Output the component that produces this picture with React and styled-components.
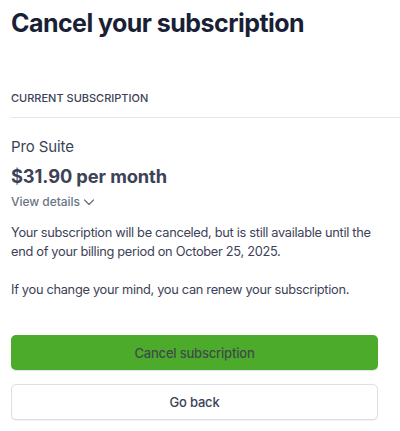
import React from "react";
import styled, { createGlobalStyle } from "styled-components";

const Global = createGlobalStyle`
  html, body { margin: 0; padding: 0; background: #ffffff; }
  body {
    font-family: Inter, "Noto Sans", "Liberation Sans", sans-serif;
    -webkit-font-smoothing: antialiased;
  }
`;

const Page = styled.div`
  width: 400px;
  height: 431px;
  overflow: hidden;
  box-sizing: border-box;
  padding: 6px 0 0 11px;
  display: flex;
  flex-direction: column;
`;

const Title = styled.h1`
  margin: 0;
  font-size: 25px;
  line-height: 34px;
  font-weight: 700;
  color: #1a1f36;
  letter-spacing: -0.55px;
`;

const Section = styled.section`
  margin-top: 51px;
  display: flex;
  flex-direction: column;
`;

const SectionLabel = styled.div`
  font-size: 11px;
  line-height: 14px;
  font-weight: 500;
  color: #3c4257;
  padding-bottom: 12px;
  border-bottom: 1px solid #e3e8ee;
`;

const PlanName = styled.div`
  margin-top: 19px;
  font-size: 15px;
  line-height: 20px;
  color: #3c4257;
  letter-spacing: -0.1px;
`;

const Price = styled.div`
  margin-top: 6px;
  font-size: 18.3px;
  line-height: 26px;
  font-weight: 700;
  color: #3c4257;
  letter-spacing: -0.1px;
`;

const DetailsToggle = styled.button`
  margin-top: 5px;
  padding: 0;
  border: 0;
  background: none;
  align-self: flex-start;
  display: flex;
  align-items: center;
  gap: 3px;
  font-family: inherit;
  font-size: 12px;
  line-height: 16px;
  font-weight: 500;
  color: #697386;
  letter-spacing: -0.05px;
  cursor: pointer;
`;

const Body = styled.p`
  margin: ${(p) => p.$top}px 0 0;
  width: 380px;
  font-size: 12.8px;
  line-height: 19px;
  color: #3c4257;
  letter-spacing: -0.3px;
`;

const Actions = styled.div`
  margin-top: 36px;
  width: 367px;
  display: flex;
  flex-direction: column;
  gap: 14px;
`;

const Button = styled.button`
  height: ${(p) => (p.$primary ? 35 : 36)}px;
  width: 100%;
  border-radius: 5px;
  border: ${(p) => (p.$primary ? "0" : "1px solid #dcdfe4")};
  background: ${(p) => (p.$primary ? "#4cab2a" : "#ffffff")};
  box-shadow: ${(p) =>
    p.$primary ? "0 1px 1px rgba(0,0,0,0.12)" : "0 1px 1px rgba(0,0,0,0.06)"};
  font-family: inherit;
  font-size: 13px;
  font-weight: 500;
  letter-spacing: -0.2px;
  color: ${(p) => (p.$primary ? "#3f4b4a" : "#3c4257")};
  cursor: pointer;
`;

const Chevron = () => (
  <svg width="12" height="12" viewBox="0 0 12 12" fill="none">
    <path d="M1.5 4l4.5 4.5L10.5 4" stroke="#697386" strokeWidth="1.3" strokeLinecap="round" strokeLinejoin="round" />
  </svg>
);

export default function App() {
  return (
    <>
      <Global />
      <Page>
        <Title>Cancel your subscription</Title>
        <Section>
          <SectionLabel>CURRENT SUBSCRIPTION</SectionLabel>
          <PlanName>Pro Suite</PlanName>
          <Price>$31.90 per month</Price>
          <DetailsToggle>
            View details <Chevron />
          </DetailsToggle>
          <Body $top={13}>
            Your subscription will be canceled, but is still available until the end of your billing period on October 25, 2025.
          </Body>
          <Body $top={19}>If you change your mind, you can renew your subscription.</Body>
        </Section>
        <Actions>
          <Button $primary>Cancel subscription</Button>
          <Button>Go back</Button>
        </Actions>
      </Page>
    </>
  );
}
